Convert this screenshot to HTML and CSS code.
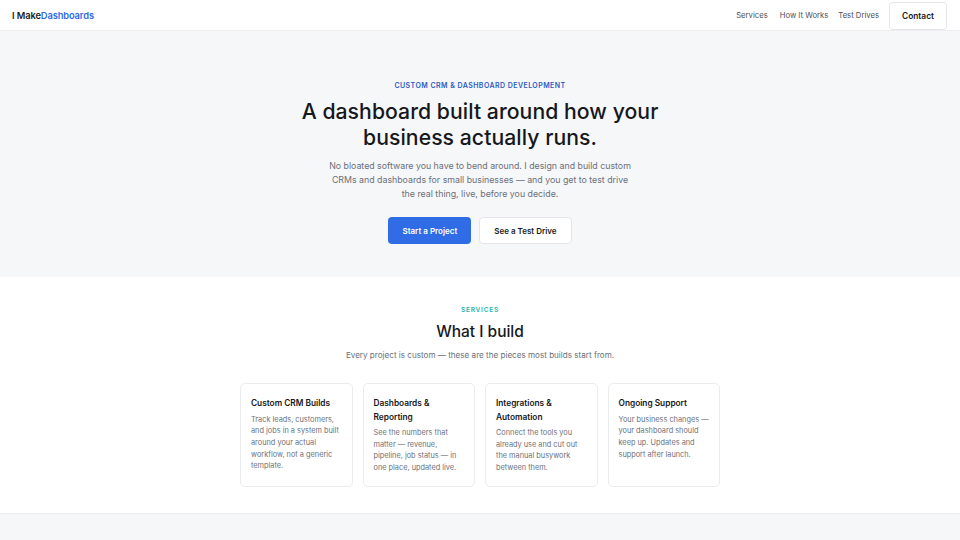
FILE: index.html
```html
<!DOCTYPE html>
<html lang="en">
<head>
<meta charset="utf-8">
<title>I Make Dashboards</title>
<link rel="stylesheet" href="styles.css">
</head>
<body>
<header class="nav">
  <a class="logo" href="#">I Make<span class="logo-accent">Dashboards</span></a>
  <nav class="nav-links">
    <a href="#">Services</a>
    <a href="#">How It Works</a>
    <a href="#">Test Drives</a>
    <a class="nav-contact" href="#">Contact</a>
  </nav>
</header>

<section class="hero">
  <p class="eyebrow">CUSTOM CRM &amp; DASHBOARD DEVELOPMENT</p>
  <h1 class="hero-title">A dashboard built around how your business actually runs.</h1>
  <p class="hero-text">No bloated software you have to bend around. I design and build custom CRMs and dashboards for small businesses — and you get to test drive the real thing, live, before you decide.</p>
  <div class="hero-actions">
    <a class="btn btn-primary" href="#">Start a Project</a>
    <a class="btn btn-secondary" href="#">See a Test Drive</a>
  </div>
</section>

<section class="services">
  <p class="section-label">SERVICES</p>
  <h2 class="section-title">What I build</h2>
  <p class="section-sub">Every project is custom — these are the pieces most builds start from.</p>
  <div class="cards">
    <div class="card">
      <h3 class="card-title">Custom CRM Builds</h3>
      <p class="card-text">Track leads, customers, and jobs in a system built around your actual workflow, not a generic template.</p>
    </div>
    <div class="card">
      <h3 class="card-title">Dashboards &amp; Reporting</h3>
      <p class="card-text">See the numbers that matter — revenue, pipeline, job status — in one place, updated live.</p>
    </div>
    <div class="card">
      <h3 class="card-title">Integrations &amp; Automation</h3>
      <p class="card-text">Connect the tools you already use and cut out the manual busywork between them.</p>
    </div>
    <div class="card">
      <h3 class="card-title">Ongoing Support</h3>
      <p class="card-text">Your business changes — your dashboard should keep up. Updates and support after launch.</p>
    </div>
  </div>
</section>

<section class="next"></section>
</body>
</html>
```

FILE: styles.css
```css
* { box-sizing: border-box; }
html, body { margin: 0; padding: 0; }
body {
  font-family: Inter, "Liberation Sans", sans-serif;
  color: #1b1d21;
  background: #ffffff;
  -webkit-font-smoothing: antialiased;
}
a { text-decoration: none; color: inherit; }
p, h1, h2, h3 { margin: 0; }

.nav {
  height: 31px;
  display: flex;
  align-items: center;
  justify-content: space-between;
  padding: 0 13px 0 12px;
  background: #fff;
  border-bottom: 1px solid #ececee;
}
.logo {
  font-size: 9.3px;
  font-weight: 600;
  letter-spacing: -0.1px;
  color: #1b1d21;
}
.logo-accent { color: #2f6be3; }
.nav-links {
  display: flex;
  align-items: center;
  gap: 10px;
  font-size: 7.7px;
  color: #4a4f57;
}
.nav-links a:nth-child(2) { margin-left: 2px; }
.nav-contact {
  height: 28px;
  width: 58px;
  margin-top: 2px;
  justify-content: center;
  display: flex;
  align-items: center;
  border: 1px solid #e6e7ea;
  border-radius: 4px;
  color: #16181c;
  font-weight: 600;
  font-size: 8.4px;
}

.hero {
  background: #f6f7f9;
  padding: 49px 0 33px;
  text-align: center;
  display: flex;
  flex-direction: column;
  align-items: center;
}
.eyebrow {
  font-size: 7px;
  line-height: 11px;
  font-weight: 600;
  letter-spacing: 0.45px;
  color: #2b5cc4;
}
.hero-title {
  margin-top: 7px;
  max-width: 380px;
  font-size: 21.2px;
  line-height: 26px;
  font-weight: 500;
  letter-spacing: 0.05px;
  color: #16181c;
}
.hero-text {
  margin-top: 9px;
  max-width: 302px;
  font-size: 8.8px;
  line-height: 14px;
  color: #6b7079;
}
.hero-actions {
  margin-top: 16px;
  display: flex;
  gap: 8px;
}
.btn {
  height: 27px;
  display: flex;
  align-items: center;
  padding: 0 14px;
  border-radius: 4px;
  font-size: 8px;
  font-weight: 600;
}
.btn-primary {
  background: #2f6ce5;
  color: #fff;
}
.btn-secondary {
  background: #fff;
  border: 1px solid #e3e5e8;
  color: #1b1d21;
}

.services {
  padding: 28px 0 26px;
  text-align: center;
  display: flex;
  flex-direction: column;
  align-items: center;
  border-bottom: 1px solid #ececee;
}
.section-label {
  font-size: 6.5px;
  line-height: 10px;
  font-weight: 600;
  letter-spacing: 0.8px;
  color: #1fb5a8;
}
.section-title {
  margin-top: 7px;
  font-size: 15.5px;
  line-height: 20px;
  font-weight: 500;
  color: #16181c;
}
.section-sub {
  margin-top: 7px;
  font-size: 8.1px;
  line-height: 13px;
  color: #6b7079;
}
.cards {
  margin-top: 21px;
  width: 480px;
  display: grid;
  grid-template-columns: repeat(4, 1fr);
  gap: 10px;
  text-align: left;
}
.card {
  border: 1px solid #ebecef;
  border-radius: 5px;
  padding: 13px 8px 12px 10px;
  background: #fff;
}
.card-title {
  font-size: 8.3px;
  line-height: 13.5px;
  font-weight: 600;
  color: #16181c;
}
.card-text {
  margin-top: 3px;
  font-size: 7.35px;
  line-height: 11.7px;
  color: #6b7079;
}

.next {
  background: #f6f7f9;
  height: 60px;
}
```
